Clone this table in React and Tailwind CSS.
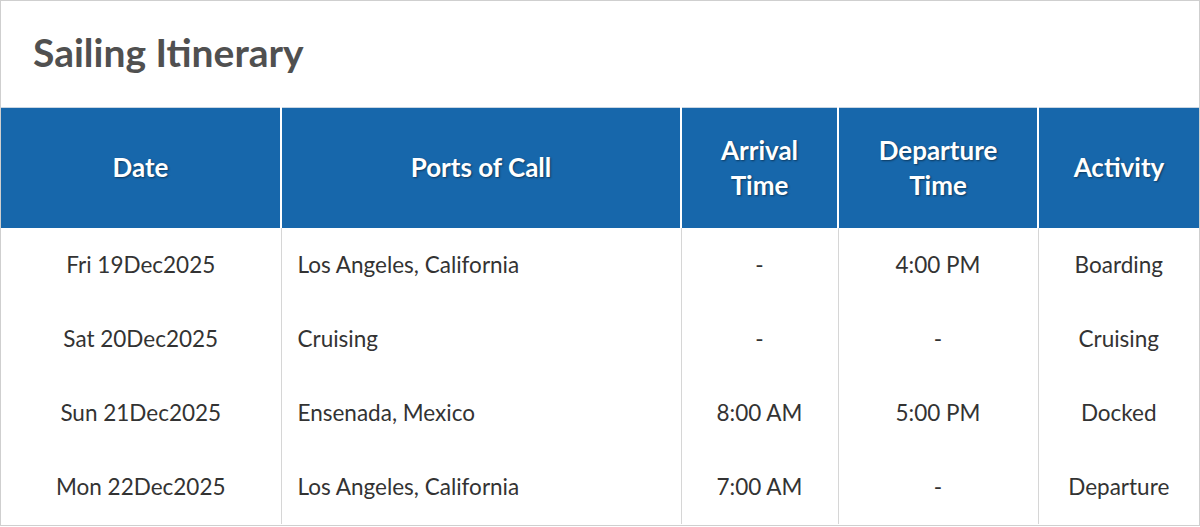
const rows = [
  { date: "Fri 19Dec2025", port: "Los Angeles, California", arrive: "-", depart: "4:00 PM", activity: "Boarding" },
  { date: "Sat 20Dec2025", port: "Cruising", arrive: "-", depart: "-", activity: "Cruising" },
  { date: "Sun 21Dec2025", port: "Ensenada, Mexico", arrive: "8:00 AM", depart: "5:00 PM", activity: "Docked" },
  { date: "Mon 22Dec2025", port: "Los Angeles, California", arrive: "7:00 AM", depart: "-", activity: "Departure" },
];

export default function App() {
  return (
    <div className="w-[1200px] h-[527px] bg-white font-['Lato',sans-serif]">
      <div className="h-[526px] border border-[#cfcfcf] flex flex-col">
        {/* Title */}
        <div className="h-[106px] pl-8 pt-[24px]">
          <h2 className="text-[39px] leading-[54px] font-bold text-[#505050]">Sailing Itinerary</h2>
        </div>

        <table className="w-full table-fixed border-collapse border-t border-[#c9d6e3]">
          <colgroup>
            <col className="w-[280px]" />
            <col className="w-[400px]" />
            <col className="w-[157px]" />
            <col className="w-[200px]" />
            <col />
          </colgroup>
          <thead>
            <tr className="h-[120px] bg-[#1767ab] text-white text-[26px] leading-[35px] font-bold [text-shadow:1px_1px_2px_rgba(0,0,0,0.45)]">
              <th className="border-r-2 border-white">Date</th>
              <th className="border-r-2 border-white">Ports of Call</th>
              <th className="border-r-2 border-white">
                Arrival
                <br />
                Time
              </th>
              <th className="border-r-2 border-white">
                Departure
                <br />
                Time
              </th>
              <th>Activity</th>
            </tr>
          </thead>
          <tbody className="text-[22.5px] text-[#333]">
            {rows.map((r) => (
              <tr key={r.date} className="h-[74px]">
                <td className="text-center border-r border-[#d6d6d6]">{r.date}</td>
                <td className="pl-4 border-r border-[#d6d6d6]">{r.port}</td>
                <td className="text-center border-r border-[#d6d6d6]">{r.arrive}</td>
                <td className="text-center border-r border-[#d6d6d6]">{r.depart}</td>
                <td className="text-center">{r.activity}</td>
              </tr>
            ))}
          </tbody>
        </table>
      </div>
    </div>
  );
}
